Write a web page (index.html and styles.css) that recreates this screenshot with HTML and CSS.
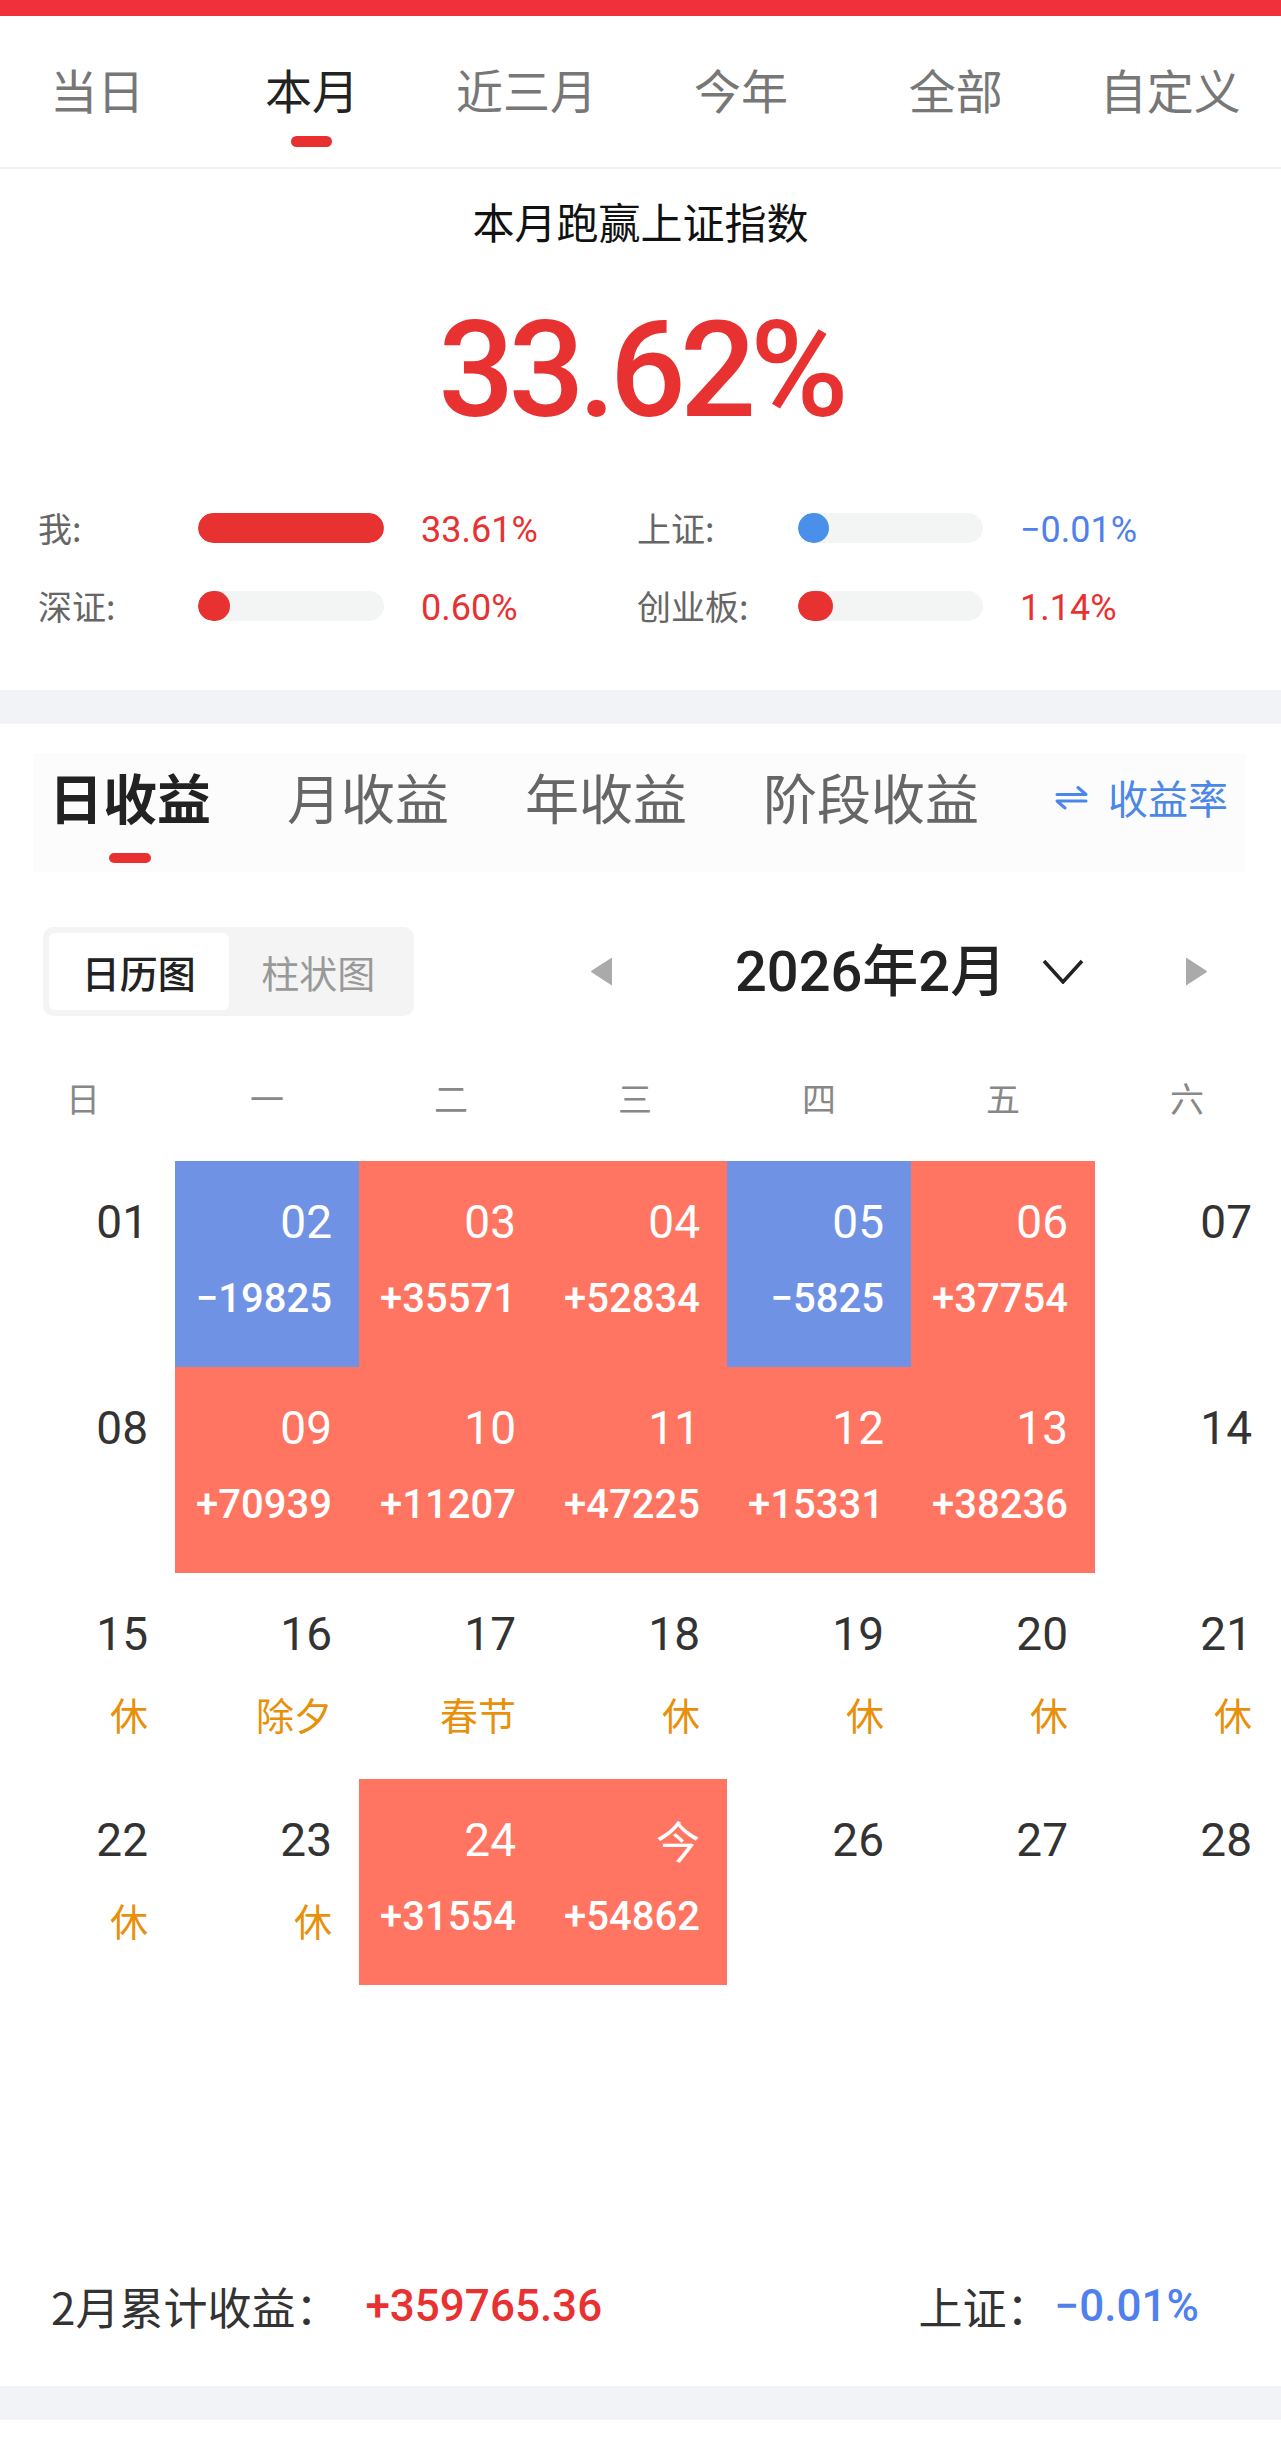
FILE: index.html
```html
<!DOCTYPE html>
<html lang="zh-CN">
<head>
<meta charset="utf-8">
<title>收益日历</title>
<link rel="stylesheet" href="styles.css">
</head>
<body>
<div class="topbar"></div>

<nav class="period-nav">
  <div class="period-tabs">
    <div class="ptab">当日</div>
    <div class="ptab active">本月<span class="ind"></span></div>
    <div class="ptab">近三月</div>
    <div class="ptab">今年</div>
    <div class="ptab">全部</div>
    <div class="ptab">自定义</div>
  </div>
</nav>

<section class="beat">
  <h1 class="beat-title">本月跑赢上证指数</h1>
  <div class="beat-num">33.62%</div>
  <div class="stats">
    <div class="lbl">我:</div>
    <div class="track"><div class="fill red" style="width:100%"></div></div>
    <div class="val red-t">33.61%</div>
    <div class="lbl">上证:</div>
    <div class="track"><div class="fill blue" style="width:31px"></div></div>
    <div class="val blue-t">−0.01%</div>

    <div class="lbl">深证:</div>
    <div class="track"><div class="fill red" style="width:32px"></div></div>
    <div class="val red-t">0.60%</div>
    <div class="lbl">创业板:</div>
    <div class="track"><div class="fill red" style="width:35px"></div></div>
    <div class="val red-t">1.14%</div>
  </div>
</section>

<div class="band"></div>

<div class="rtabs">
  <div class="rtab active">日收益<span class="ind"></span></div>
  <div class="rtab">月收益</div>
  <div class="rtab">年收益</div>
  <div class="rtab">阶段收益</div>
  <div class="rate-switch">
    <svg class="swap" width="33" height="25" viewBox="0 0 33 25"><path d="M2 9.5H31L23 2.5M31 16H2L10 23" fill="none" stroke="#4a87e8" stroke-width="3" stroke-linecap="round" stroke-linejoin="round"/></svg>
    <span>收益率</span>
  </div>
</div>

<div class="cal-toolbar">
  <div class="seg">
    <div class="seg-item active">日历图</div>
    <div class="seg-item">柱状图</div>
  </div>
  <svg class="tri-left" width="23" height="29" viewBox="0 0 23 29"><path d="M22 1.5V27.5Q22 29 20.8 27.8L1.5 15.3Q0.5 14.5 1.5 13.7L20.8 1.2Q22 0 22 1.5Z" fill="#aaaaaa"/></svg>
  <div class="month">2026年2月</div>
  <svg class="chev" width="42" height="25" viewBox="0 0 42 25"><path d="M2 2L21 23L40 2" fill="none" stroke="#222" stroke-width="3.5"/></svg>
  <svg class="tri-right" width="23" height="29" viewBox="0 0 23 29"><path d="M1 1.5V27.5Q1 29 2.2 27.8L21.5 15.3Q22.5 14.5 21.5 13.7L2.2 1.2Q1 0 1 1.5Z" fill="#aaaaaa"/></svg>
</div>

<div class="weekdays">
  <div>日</div><div>一</div><div>二</div><div>三</div><div>四</div><div>五</div><div>六</div>
</div>

<div class="calendar">
  <div class="day"><div class="num">01</div></div>
  <div class="day down"><div class="num">02</div><div class="sub">−19825</div></div>
  <div class="day up"><div class="num">03</div><div class="sub">+35571</div></div>
  <div class="day up"><div class="num">04</div><div class="sub">+52834</div></div>
  <div class="day down"><div class="num">05</div><div class="sub">−5825</div></div>
  <div class="day up"><div class="num">06</div><div class="sub">+37754</div></div>
  <div class="day"><div class="num">07</div></div>

  <div class="day"><div class="num">08</div></div>
  <div class="day up"><div class="num">09</div><div class="sub">+70939</div></div>
  <div class="day up"><div class="num">10</div><div class="sub">+11207</div></div>
  <div class="day up"><div class="num">11</div><div class="sub">+47225</div></div>
  <div class="day up"><div class="num">12</div><div class="sub">+15331</div></div>
  <div class="day up"><div class="num">13</div><div class="sub">+38236</div></div>
  <div class="day"><div class="num">14</div></div>

  <div class="day"><div class="num">15</div><div class="hol">休</div></div>
  <div class="day"><div class="num">16</div><div class="hol">除夕</div></div>
  <div class="day"><div class="num">17</div><div class="hol">春节</div></div>
  <div class="day"><div class="num">18</div><div class="hol">休</div></div>
  <div class="day"><div class="num">19</div><div class="hol">休</div></div>
  <div class="day"><div class="num">20</div><div class="hol">休</div></div>
  <div class="day"><div class="num">21</div><div class="hol">休</div></div>

  <div class="day"><div class="num">22</div><div class="hol">休</div></div>
  <div class="day"><div class="num">23</div><div class="hol">休</div></div>
  <div class="day up"><div class="num">24</div><div class="sub">+31554</div></div>
  <div class="day up"><div class="num cjk">今</div><div class="sub">+54862</div></div>
  <div class="day"><div class="num">26</div></div>
  <div class="day"><div class="num">27</div></div>
  <div class="day"><div class="num">28</div></div>
</div>

<div class="summary">
  <span class="sum-label">2月累计收益：</span>
  <span class="sum-val red-t">+359765.36</span>
  <span class="sum-label right">上证：</span>
  <span class="sum-val blue-t">−0.01%</span>
</div>

<div class="band bottom"></div>
</body>
</html>
```

FILE: styles.css
```css
* {
  box-sizing: border-box;
  margin: 0;
  padding: 0;
}

body {
  width: 1281px;
  margin: 0;
  background: #ffffff;
  font-family: "Noto Sans CJK SC", "Noto Sans", sans-serif;
  color: #333333;
  overflow-x: hidden;
}

.topbar {
  height: 16px;
  background: #f0303a;
}

/* period tabs */
.period-nav {
  height: 153px;
  border-bottom: 2px solid #f0f0f0;
}

.period-tabs {
  display: grid;
  grid-template-columns: repeat(6, 214.6px);
  margin-left: -10px;
}

.ptab {
  display: flex;
  flex-direction: column;
  align-items: center;
  padding-top: 47px;
  font-size: 47px;
  line-height: 52px;
  color: #777777;
}

.ptab.active {
  color: #222222;
}

.ind {
  display: block;
  width: 41px;
  height: 11px;
  border-radius: 6px;
  background: #e83030;
  margin-top: 21px;
}

/* beat section */
.beat {
  text-align: center;
}

.beat-title {
  margin-top: 28px;
  font-size: 42px;
  line-height: 48px;
  font-weight: 400;
  color: #111111;
}

.beat-num {
  margin-top: 59px;
  font-family: Roboto, "Liberation Sans", sans-serif;
  font-weight: 500;
  font-size: 134px;
  line-height: 134px;
  letter-spacing: -6px;
  color: #e83232;
}

.stats {
  display: grid;
  grid-template-columns: 160px 186px 253px 161px 185px 1fr;
  grid-auto-rows: 48px;
  row-gap: 30px;
  align-items: center;
  margin-top: 66px;
  padding: 0 0 60px 38px;
  text-align: left;
}

.lbl {
  font-size: 34px;
  line-height: 48px;
  color: #666666;
}

.track {
  height: 30px;
  border-radius: 15px;
  background: #f3f4f4;
  overflow: hidden;
}

.fill {
  height: 100%;
  border-radius: 15px;
}

.fill.red {
  background: #e83232;
}

.fill.blue {
  background: #4a90ea;
}

.val {
  padding: 4px 0 0 37px;
  font-family: Roboto, "Liberation Sans", sans-serif;
  font-size: 36px;
  line-height: 48px;
}

.red-t {
  color: #e83232;
}

.blue-t {
  color: #4f80ee;
}

.band {
  height: 34px;
  background: #f2f3f7;
}

/* return tabs */
.rtabs {
  display: flex;
  align-items: flex-start;
  height: 119px;
  margin: 29px 35px 0 33px;
  padding: 13px 18px 0 16px;
  background: #fcfcfc;
}

.rtab {
  display: flex;
  flex-direction: column;
  align-items: center;
  margin-right: 76px;
  font-size: 54px;
  line-height: 62px;
  color: #666666;
}

.rtab.active {
  font-weight: 700;
  color: #222222;
}

.rtab .ind {
  width: 42px;
  height: 10px;
  border-radius: 5px;
  margin-top: 25px;
}

.rate-switch {
  display: flex;
  align-items: center;
  height: 62px;
  margin-left: auto;
  font-size: 40px;
  color: #4a87e8;
}

.swap {
  margin-right: 20px;
}

/* calendar toolbar */
.cal-toolbar {
  display: flex;
  align-items: center;
  height: 89px;
  margin-top: 55px;
  padding-left: 43px;
}

.seg {
  display: flex;
  width: 371px;
  height: 89px;
  padding: 6px;
  border-radius: 10px;
  background: #f4f4f4;
}

.seg-item {
  flex: 1;
  display: flex;
  align-items: center;
  justify-content: center;
  border-radius: 6px;
  font-size: 38px;
  color: #999999;
}

.seg-item.active {
  background: #ffffff;
  color: #222222;
  font-weight: 500;
}

.tri-left {
  margin-left: 176px;
}

.month {
  margin-left: 122px;
  font-family: Roboto, "Noto Sans CJK SC", sans-serif;
  font-weight: 500;
  font-size: 56px;
  line-height: 70px;
  color: #222222;
}

.chev {
  margin-left: 36px;
}

.tri-right {
  margin-left: 101px;
}

/* calendar */
.weekdays {
  display: grid;
  grid-template-columns: repeat(7, 184px);
  margin: 62px 0 0 -9px;
  font-size: 34px;
  line-height: 40px;
  color: #888888;
  text-align: center;
}

.calendar {
  display: grid;
  grid-template-columns: repeat(7, 184px);
  grid-auto-rows: 206px;
  margin: 43px 0 0 -9px;
}

.day {
  padding: 36px 27px 0 0;
  text-align: right;
}

.day .num {
  font-family: Roboto, "Liberation Sans", sans-serif;
  font-size: 46px;
  line-height: 50px;
  color: #333333;
}

.day .num.cjk {
  font-family: "Noto Sans CJK SC", sans-serif;
  font-size: 44px;
}

.day .sub {
  margin-top: 30px;
  font-family: Roboto, "Liberation Sans", sans-serif;
  font-weight: 500;
  font-size: 40px;
  line-height: 44px;
  color: #ffffff;
}

.day .hol {
  margin-top: 33px;
  font-size: 38px;
  line-height: 44px;
  color: #e8900a;
}

.day.up {
  background: #ff7561;
}

.day.down {
  background: #6f92e4;
}

.day.up .num,
.day.down .num {
  color: #ffffff;
}

/* summary */
.summary {
  display: flex;
  align-items: center;
  height: 50px;
  margin-top: 296px;
  padding: 0 82px 0 51px;
}

.sum-label {
  font-size: 44px;
  line-height: 50px;
  color: #333333;
}

.sum-label.right {
  margin-left: auto;
  margin-right: 4px;
}

.sum-val {
  font-family: Roboto, "Liberation Sans", sans-serif;
  font-weight: 500;
  font-size: 44px;
  line-height: 50px;
}

.sum-val.red-t {
  margin-left: 26px;
}

.band.bottom {
  margin-top: 55px;
  margin-bottom: 26px;
}
```
